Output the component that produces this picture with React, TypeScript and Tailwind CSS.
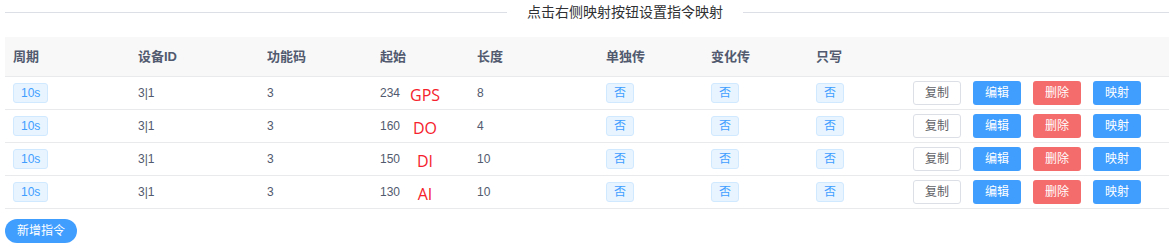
import React from 'react';

interface CommandRow {
  period: string;
  device: string;
  func: string;
  start: string;
  label: string;
  length: string;
}

const rows: CommandRow[] = [
  { period: '10s', device: '3|1', func: '3', start: '234', label: 'GPS', length: '8' },
  { period: '10s', device: '3|1', func: '3', start: '160', label: 'DO', length: '4' },
  { period: '10s', device: '3|1', func: '3', start: '150', label: 'DI', length: '10' },
  { period: '10s', device: '3|1', func: '3', start: '130', label: 'AI', length: '10' },
];

const headers = ['周期', '设备ID', '功能码', '起始', '长度', '单独传', '变化传', '只写', ''];

const gridCols =
  'grid grid-cols-[125px_129px_113px_97px_129px_105px_105px_97px_1fr]';

const Tag: React.FC<{ children: React.ReactNode }> = ({ children }) => (
  <span className="inline-flex h-[20px] items-center rounded-[3px] border border-[#d1e9ff] bg-[#e8f4ff] px-[7px] text-[12px] text-[#409eff]">
    {children}
  </span>
);

const App: React.FC = () => {
  return (
    <div className="h-[250px] w-[1169px] bg-white pl-[5px] font-['Liberation_Sans','Noto_Sans_CJK_SC',sans-serif] text-[12px] text-[#515a6e]">
      {/* Divider with title */}
      <div className="flex h-[25px] items-center">
        <div className="h-px flex-1 bg-[#dcdfe6]" />
        <span className="px-[20px] text-[14px] text-[#303133]">点击右侧映射按钮设置指令映射</span>
        <div className="h-px w-[426px] bg-[#dcdfe6]" />
      </div>

      {/* Table */}
      <div className="mt-[12px]">
        <div className={`${gridCols} h-[40px] items-center border-b border-[#e8eaec] bg-[#f8f8f9] text-[13px] font-bold text-[#515a6e]`}>
          {headers.map((h, i) => (
            <div key={i} className="px-[8px]">
              {h}
            </div>
          ))}
        </div>

        {rows.map((row, index) => (
          <div key={index} className={`${gridCols} h-[33px] items-center border-b border-[#e8eaec]`}>
            <div className="px-[8px]">
              <Tag>{row.period}</Tag>
            </div>
            <div className="px-[8px]">{row.device}</div>
            <div className="px-[8px]">{row.func}</div>
            <div className="flex items-center px-[8px]">
              <span>{row.start}</span>
              <span className="ml-[8px] mt-[4px] w-[34px] text-center font-['Open_Sans',sans-serif] text-[16px] leading-none text-[#f5222d]">
                {row.label}
              </span>
            </div>
            <div className="px-[8px]">{row.length}</div>
            <div className="px-[8px]">
              <Tag>否</Tag>
            </div>
            <div className="px-[8px]">
              <Tag>否</Tag>
            </div>
            <div className="px-[8px]">
              <Tag>否</Tag>
            </div>
            <div className="flex items-center gap-[12px] px-[8px]">
              <button className="h-[24px] w-[48px] rounded-[3px] border border-[#dcdfe6] bg-white text-[12px] text-[#606266]">
                复制
              </button>
              <button className="h-[24px] w-[48px] rounded-[3px] bg-[#409eff] text-[12px] text-white">编辑</button>
              <button className="h-[24px] w-[48px] rounded-[3px] bg-[#f56c6c] text-[12px] text-white">删除</button>
              <button className="h-[24px] w-[48px] rounded-[3px] bg-[#409eff] text-[12px] text-white">映射</button>
            </div>
          </div>
        ))}
      </div>

      <button className="mt-[10px] h-[24px] w-[72px] rounded-full bg-[#409eff] text-[12px] text-white">新增指令</button>
    </div>
  );
};

export default App;
